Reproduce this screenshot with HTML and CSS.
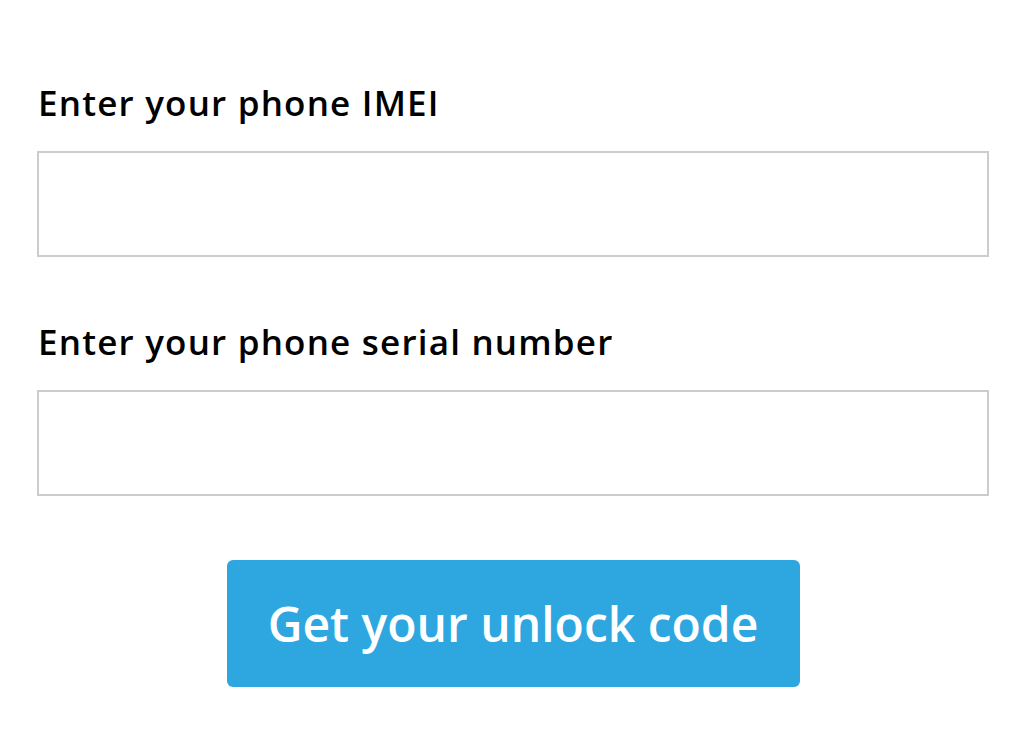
FILE: index.html
```html
<!DOCTYPE html>
<html lang="en">
<head>
<meta charset="utf-8">
<title>Unlock code</title>
<link rel="stylesheet" href="styles.css">
</head>
<body>
<form class="unlock-form">
  <div class="field">
    <label class="field-label" for="imei">Enter your phone IMEI</label>
    <input class="field-input" id="imei" type="text">
  </div>
  <div class="field">
    <label class="field-label" for="serial">Enter your phone serial number</label>
    <input class="field-input" id="serial" type="text">
  </div>
  <div class="actions">
    <button class="submit-btn" type="button">Get your unlock code</button>
  </div>
</form>
</body>
</html>
```

FILE: styles.css
```css
html, body {
  margin: 0;
  padding: 0;
  background: #ffffff;
}

body {
  font-family: "Open Sans", "Liberation Sans", sans-serif;
  color: #000000;
}

.unlock-form {
  width: 952px;
  margin: 0 0 0 37px;
  padding-top: 82px;
  display: flex;
  flex-direction: column;
}

.field {
  display: flex;
  flex-direction: column;
  margin-bottom: 64px;
}

.field-label {
  font-size: 35px;
  line-height: 42px;
  font-weight: 600;
  letter-spacing: 1.2px;
  margin: 0 0 27px 1px;
}

.field-input {
  box-sizing: border-box;
  width: 952px;
  height: 106px;
  border: 2px solid #cccccc;
  border-radius: 0;
  background: #ffffff;
  margin: 0;
  padding: 0 16px;
  font: inherit;
  font-size: 30px;
  outline: none;
}

.actions {
  display: flex;
  justify-content: center;
}

.submit-btn {
  width: 573px;
  height: 127px;
  background: #2ea7e0;
  color: #ffffff;
  border: none;
  border-radius: 6px;
  font-family: "Open Sans", "Liberation Sans", sans-serif;
  font-size: 48px;
  font-weight: 600;
  padding: 0;
  cursor: pointer;
}
```
